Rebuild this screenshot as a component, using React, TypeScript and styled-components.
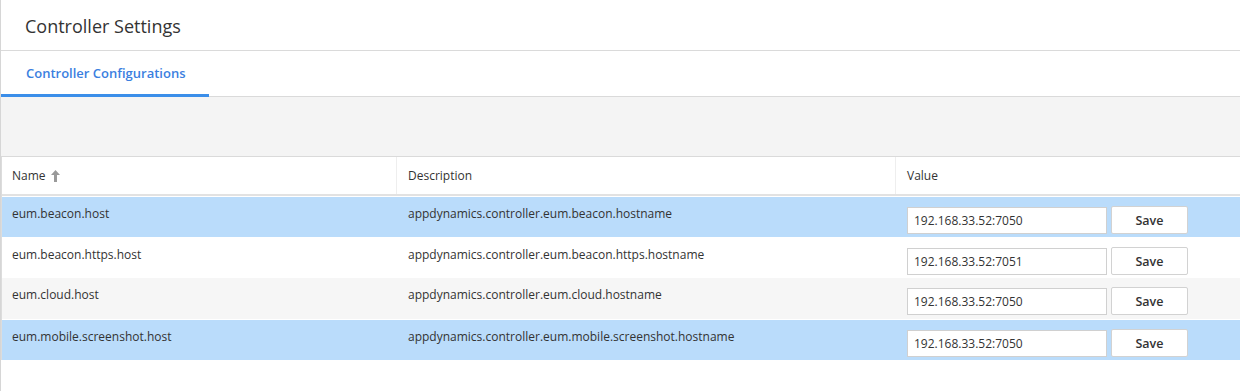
import styled, { createGlobalStyle } from "styled-components";

interface Setting {
  name: string;
  description: string;
  value: string;
  tone: "selected" | "plain" | "stripe";
}

const settings: Setting[] = [
  { name: "eum.beacon.host", description: "appdynamics.controller.eum.beacon.hostname", value: "192.168.33.52:7050", tone: "selected" },
  { name: "eum.beacon.https.host", description: "appdynamics.controller.eum.beacon.https.hostname", value: "192.168.33.52:7051", tone: "plain" },
  { name: "eum.cloud.host", description: "appdynamics.controller.eum.cloud.hostname", value: "192.168.33.52:7050", tone: "stripe" },
  { name: "eum.mobile.screenshot.host", description: "appdynamics.controller.eum.mobile.screenshot.hostname", value: "192.168.33.52:7050", tone: "selected" },
];

const toneColors = {
  selected: "#badcfb",
  plain: "#ffffff",
  stripe: "#f6f6f6",
};

const GlobalStyle = createGlobalStyle`
  body {
    margin: 0;
    background: #fff;
    font-family: "Open Sans", "Noto Sans", sans-serif;
    color: #333;
  }
`;

const SortArrow = () => (
  <svg width="9" height="12" viewBox="0 0 9 12">
    <path d="M4.5 0 L9 5 L6 5 L6 12 L3 12 L3 5 L0 5 Z" fill="#9a9a9a" />
  </svg>
);

const App = () => {
  return (
    <>
      <GlobalStyle />
      <Page>
        <Header>
          <Title>Controller Settings</Title>
        </Header>
        <TabBar>
          <Tab $active>Controller Configurations</Tab>
        </TabBar>
        <Toolbar />
        <Table>
          <HeadRow>
            <HeadCell>
              Name <SortArrow />
            </HeadCell>
            <HeadCell>Description</HeadCell>
            <HeadCell $last>Value</HeadCell>
          </HeadRow>
          {settings.map((s) => (
            <Row key={s.name + s.tone} $tone={s.tone}>
              <Cell>{s.name}</Cell>
              <Cell>{s.description}</Cell>
              <ValueCell>
                <ValueInput defaultValue={s.value} />
                <SaveButton>Save</SaveButton>
              </ValueCell>
            </Row>
          ))}
        </Table>
      </Page>
    </>
  );
};

const Page = styled.div`
  height: 391px;
  border-left: 1px solid #d6d6d6;
  box-sizing: border-box;
  overflow: hidden;
`;

const Header = styled.div`
  height: 50px;
  display: flex;
  align-items: center;
  padding: 0 24px;
  border-bottom: 1px solid #dadada;
`;

const Title = styled.h1`
  margin: 0;
  font-size: 18px;
  font-weight: 400;
  color: #333;
  padding-top: 2px;
`;

const TabBar = styled.div`
  height: 45px;
  display: flex;
  border-bottom: 1px solid #dadada;
  margin-left: -1px;
`;

const Tab = styled.div<{ $active?: boolean }>`
  width: 183px;
  padding-left: 25px;
  display: flex;
  align-items: center;
  font-size: 13px;
  font-weight: 600;
  color: ${(p) => (p.$active ? "#3b7fdf" : "#666")};
  border-left: 1px solid ${(p) => (p.$active ? "#3b8ee9" : "transparent")};
  border-bottom: 3px solid ${(p) => (p.$active ? "#3b8ee9" : "transparent")};
  margin-bottom: -1px;
  box-sizing: content-box;
  height: 43px;
`;

const Toolbar = styled.div`
  height: 59px;
  background: #f4f4f4;
  border-bottom: 1px solid #dadada;
`;

const Table = styled.div`
  border-left: 1px solid #dcdcdc;
`;

const grid = `
  display: grid;
  grid-template-columns: 395px 499px 1fr;
`;

const HeadRow = styled.div`
  ${grid}
  height: 37px;
  border-bottom: 2px solid #e2e2e2;
`;

const HeadCell = styled.div<{ $last?: boolean }>`
  display: flex;
  align-items: center;
  gap: 5px;
  padding: 0 10px;
  font-size: 12px;
  color: #333;
  border-right: ${(p) => (p.$last ? "none" : "1px solid #eeeeee")};
  &:not(:first-child) {
    padding-left: 11px;
  }
`;

const Row = styled.div<{ $tone: Setting["tone"] }>`
  ${grid}
  height: 40px;
  border-top: 1px solid #fff;
  background: ${(p) => toneColors[p.$tone]};
  &:nth-child(3) {
    height: 39px;
  }
  &:nth-child(4) {
    height: 41px;
  }
`;

const Cell = styled.div`
  padding: 8px 10px 0;
  font-size: 12px;
  line-height: 18px;
  color: #333;
  & + & {
    padding-left: 11px;
  }
`;

const ValueCell = styled.div`
  display: flex;
  align-items: flex-start;
  gap: 4px;
  padding: 10px 0 0 11px;
`;

const ValueInput = styled.input`
  width: 200px;
  height: 27px;
  box-sizing: border-box;
  border: 1px solid #d0d0d0;
  padding: 0 6px;
  font-family: "Open Sans", "Noto Sans", sans-serif;
  font-size: 12px;
  color: #333;
  background: #fff;
  outline: none;
`;

const SaveButton = styled.button`
  width: 77px;
  height: 28px;
  border: 1px solid #d2d2d2;
  border-radius: 2px;
  background: #fff;
  font-family: "Open Sans", "Noto Sans", sans-serif;
  font-size: 12.5px;
  font-weight: 600;
  color: #333;
  cursor: pointer;
  margin-top: -1px;
`;

export default App;
